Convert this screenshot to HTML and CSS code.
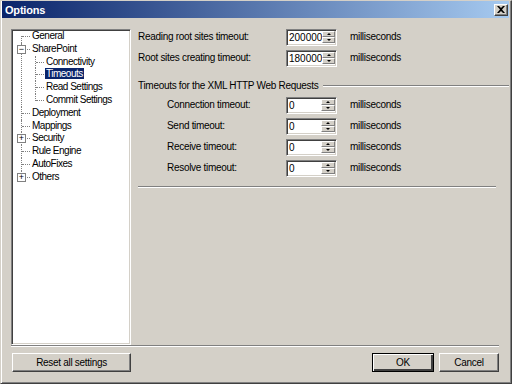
FILE: index.html
```html
<!DOCTYPE html>
<html lang="en">
<head>
  <meta charset="UTF-8">
  <title>Options</title>
  <link rel="stylesheet" href="styles.css">
</head>
<body>
  <div class="window">
    <div class="titlebar">
      <span class="title">Options</span>
      <button class="close-btn">
        <svg width="8" height="7" viewBox="0 0 8 7"><path d="M0 0h2l2 2 2-2h2L5 3.5 8 7H6L4 5 2 7H0l3-3.5z" fill="#000"/></svg>
      </button>
    </div>

    <div class="main">
      <div class="tree">
        <ul class="tree-root">
          <li class="first"><span class="label">General</span></li>
          <li>
            <span class="toggle">&minus;</span>
            <span class="label">SharePoint</span>
            <ul class="tree-sub">
              <li><span class="label">Connectivity</span></li>
              <li><span class="label selected">Timeouts</span></li>
              <li><span class="label">Read Settings</span></li>
              <li class="last"><span class="label">Commit Settings</span></li>
            </ul>
          </li>
          <li><span class="label">Deployment</span></li>
          <li><span class="label">Mappings</span></li>
          <li><span class="toggle">+</span><span class="label">Security</span></li>
          <li><span class="label">Rule Engine</span></li>
          <li><span class="label">AutoFixes</span></li>
          <li class="last"><span class="toggle">+</span><span class="label">Others</span></li>
        </ul>
      </div>

      <div class="content">
        <div class="field">
          <span class="field-label">Reading root sites timeout:</span>
          <span class="spin"><span class="spin-value">200000</span><span class="spin-btns"><i class="up"></i><i class="down"></i></span></span>
          <span class="unit">milliseconds</span>
        </div>
        <div class="field">
          <span class="field-label">Root sites creating timeout:</span>
          <span class="spin"><span class="spin-value">180000</span><span class="spin-btns"><i class="up"></i><i class="down"></i></span></span>
          <span class="unit">milliseconds</span>
        </div>

        <div class="group-title">
          <span>Timeouts for the XML HTTP Web Requests</span>
          <span class="etched"></span>
        </div>

        <div class="field indent">
          <span class="field-label">Connection timeout:</span>
          <span class="spin"><span class="spin-value">0</span><span class="spin-btns"><i class="up"></i><i class="down"></i></span></span>
          <span class="unit">milliseconds</span>
        </div>
        <div class="field indent">
          <span class="field-label">Send timeout:</span>
          <span class="spin"><span class="spin-value">0</span><span class="spin-btns"><i class="up"></i><i class="down"></i></span></span>
          <span class="unit">milliseconds</span>
        </div>
        <div class="field indent">
          <span class="field-label">Receive timeout:</span>
          <span class="spin"><span class="spin-value">0</span><span class="spin-btns"><i class="up"></i><i class="down"></i></span></span>
          <span class="unit">milliseconds</span>
        </div>
        <div class="field indent">
          <span class="field-label">Resolve timeout:</span>
          <span class="spin"><span class="spin-value">0</span><span class="spin-btns"><i class="up"></i><i class="down"></i></span></span>
          <span class="unit">milliseconds</span>
        </div>

        <div class="etched full"></div>
      </div>
    </div>

    <div class="etched bottom-sep"></div>

    <div class="footer">
      <button class="btn reset">Reset all settings</button>
      <div class="footer-right">
        <button class="btn default">OK</button>
        <button class="btn">Cancel</button>
      </div>
    </div>
  </div>
</body>
</html>
```

FILE: styles.css
```css
* {
  box-sizing: border-box;
}

body {
  margin: 0;
  padding: 0;
  font-family: "Liberation Sans", Arial, sans-serif;
  font-size: 10px;
  letter-spacing: -0.3px;
  color: #000;
}

.window {
  width: 512px;
  height: 384px;
  background-color: #d4d0c8;
  border: 1px solid;
  border-color: #d4d0c8 #404040 #404040 #d4d0c8;
  box-shadow: inset 1px 0 0 #fff, inset -1px -1px 0 #808080;
  padding: 0 2px 2px 1px;
  display: flex;
  flex-direction: column;
}

.titlebar {
  height: 17px;
  background: linear-gradient(to right, #0a246a, #a6caf0);
  display: flex;
  align-items: center;
  justify-content: space-between;
  padding: 0 1px 0 3px;
}

.title {
  color: #fff;
  font-weight: bold;
  font-size: 11px;
  letter-spacing: -0.2px;
}

.close-btn {
  width: 14px;
  height: 12px;
  padding: 0;
  background-color: #d4d0c8;
  border: 1px solid;
  border-color: #fff #404040 #404040 #fff;
  box-shadow: inset -1px -1px 0 #808080;
  display: flex;
  align-items: center;
  justify-content: center;
}

.main {
  display: flex;
  padding: 11px 0 0 9px;
  height: 327px;
}

/* tree view */
.tree {
  width: 120px;
  height: 316px;
  background-color: #fff;
  border: 1px solid;
  border-color: #808080 #fff #fff #808080;
  box-shadow: inset 1px 1px 0 #404040, inset -1px -1px 0 #d4d0c8;
  padding: 0 0 0 9px;
  letter-spacing: -0.5px;
}

.tree ul {
  list-style: none;
  margin: 0;
  padding: 0;
}

.tree li {
  position: relative;
  padding-left: 10px;
  line-height: 12.8px;
}

.tree li::before {
  content: "";
  position: absolute;
  left: 0;
  top: 0;
  height: 100%;
  border-left: 1px dotted #808080;
}

.tree li.first::before {
  top: 6px;
  height: calc(100% - 6px);
}

.tree li.last::before {
  height: 7px;
}

.tree li::after {
  content: "";
  position: absolute;
  left: 1px;
  top: 6px;
  width: 8px;
  border-top: 1px dotted #808080;
}

.tree-sub {
  margin-left: 4px !important;
}

.label {
  padding: 0 1px;
  white-space: nowrap;
}

.label.selected {
  background-color: #0a246a;
  color: #fff;
}

.toggle {
  position: absolute;
  left: -4px;
  top: 2px;
  width: 9px;
  height: 9px;
  border: 1px solid #808080;
  background-color: #fff;
  font-size: 9px;
  line-height: 6px;
  letter-spacing: 0;
  text-align: center;
  z-index: 1;
}

/* settings */
.content {
  flex: 1;
  padding: 0 0 0 7px;
}

.field {
  display: flex;
  align-items: center;
  height: 17px;
  margin-bottom: 4px;
}

.field-label {
  width: 148px;
  margin-top: -2px;
}

.field.indent .field-label {
  width: 119px;
  margin-left: 29px;
}

.spin {
  display: flex;
  width: 51px;
  height: 17px;
  background-color: #fff;
  border: 1px solid;
  border-color: #808080 #fff #fff #808080;
  box-shadow: inset 1px 1px 0 #404040, inset -1px -1px 0 #d4d0c8;
  padding: 2px 0 2px 2px;
  margin-right: 13px;
}

.spin-value {
  flex: 1;
  line-height: 12px;
  letter-spacing: 0;
}

.spin-btns {
  width: 14px;
  display: flex;
  flex-direction: column;
  margin: -1px 1px 0 0;
}

.spin-btns i {
  flex: 1;
  background-color: #d4d0c8;
  border: 1px solid;
  border-color: #fff #808080 #808080 #fff;
  position: relative;
}

.spin-btns i::after {
  content: "";
  position: absolute;
  left: 4px;
  top: 1px;
  border-left: 2px solid transparent;
  border-right: 2px solid transparent;
}

.spin-btns .up::after {
  border-bottom: 2px solid #000;
}

.spin-btns .down::after {
  border-top: 2px solid #000;
}

.unit {
  margin-top: -2px;
}

.group-title {
  display: flex;
  align-items: center;
  margin: 12px 0 5px;
  height: 13px;
}

.group-title .etched {
  flex: 1;
  margin: 1px 0 0 5px;
}

.etched {
  height: 2px;
  border-top: 1px solid #808080;
  border-bottom: 1px solid #fff;
}

.etched.full {
  margin: 9px 0 0 0;
  width: 358px;
}

.bottom-sep {
  margin: 0 10px 0 9px;
}

.footer {
  display: flex;
  justify-content: space-between;
  padding: 6px 10px 0 10px;
}

.footer-right {
  display: flex;
  gap: 5px;
}

.btn {
  height: 19px;
  width: 60px;
  padding: 0;
  font-family: "Liberation Sans", Arial, sans-serif;
  font-size: 10px;
  letter-spacing: -0.3px;
  color: #000;
  background-color: #d4d0c8;
  border: 1px solid;
  border-color: #fff #404040 #404040 #fff;
  box-shadow: inset -1px -1px 0 #808080;
}

.btn.reset {
  width: 119px;
}

.btn.default {
  width: 62px;
  border: 1px solid #000;
  box-shadow: inset 1px 1px 0 #fff, inset -2px -2px 0 #404040, inset -1px -1px 0 #808080;
}
```
